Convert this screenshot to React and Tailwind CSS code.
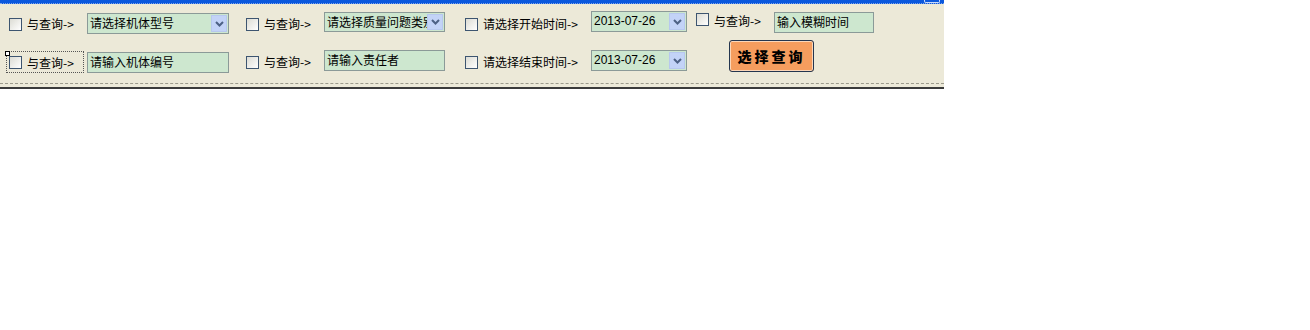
import React from "react";

const cn = '"Noto Sans CJK SC", "Noto Sans", sans-serif';

function Chevron() {
  return (
    <svg width="9" height="6" viewBox="0 0 9 6">
      <path d="M1 1 L4.5 4.5 L8 1" fill="none" stroke="#4d6185" strokeWidth="2" />
    </svg>
  );
}

function Check({ className = "" }) {
  return (
    <div
      className={`w-[13px] h-[13px] shrink-0 border border-[#3d5570] bg-gradient-to-br from-[#dcdcd4] to-white ${className}`}
    />
  );
}

function Label({ children, w, className = "" }) {
  return (
    <div
      className={`ml-[5px] shrink-0 text-[12px] leading-[14px] text-black whitespace-nowrap ${w} ${className}`}
      style={{ fontFamily: cn }}
    >
      {children}
    </div>
  );
}

function Field({ children, w, h = "h-[21px]", className = "", drop = false, mono = false }) {
  return (
    <div
      className={`shrink-0 relative flex items-start border border-[#8b9a98] bg-[#cde7cf] overflow-hidden ${w} ${h} ${className}`}
    >
      <div
        className="pl-[2px] pt-[1px] whitespace-nowrap text-black text-[12px] leading-[16px]"
        style={{ fontFamily: mono ? '"Liberation Sans", Arial, sans-serif' : cn }}
      >
        {children}
      </div>
      {drop && (
        <div className="absolute right-[1px] top-[1px] bottom-[1px] w-[16px] bg-[#c3d3f7] border border-[#b7c8ee] flex items-center justify-center">
          <Chevron />
        </div>
      )}
    </div>
  );
}

export default function App() {
  return (
    <div className="w-[1310px] h-[330px] bg-white">
      <div className="w-[944px] bg-[#ece9d8] flex flex-col">
        <div className="h-[4px] bg-[#0b58dd] flex justify-end border-b border-dotted border-[#7ea4ec]">
          <div className="w-[16px] h-[3px] mr-[4px] border border-t-0 border-[#c9dafa] rounded-b-[2px]" />
        </div>
        {/* row 1 */}
        <div className="mt-[7px] h-[39px] flex items-start pl-[9px]">
          <Check className="mt-[7px]" />
          <Label w="w-[60px]" className="mt-[6px]">与查询-&gt;</Label>
          <Field w="w-[142px]" className="mt-[2px]" drop>请选择机体型号</Field>

          <Check className="mt-[7px] ml-[17px]" />
          <Label w="w-[60px]" className="mt-[6px]">与查询-&gt;</Label>
          <Field w="w-[121px]" h="h-[20px]" className="mt-[1px]" drop>请选择质量问题类别</Field>

          <Check className="mt-[7px] ml-[20px]" />
          <Label w="w-[108px]" className="mt-[6px]">请选择开始时间-&gt;</Label>
          <Field w="w-[96px]" className="mt-0" drop mono>2013-07-26</Field>

          <Check className="mt-[2px] ml-[9px]" />
          <Label w="w-[60px]" className="mt-[3px]">与查询-&gt;</Label>
          <Field w="w-[100px]" className="mt-[1px]">输入模糊时间</Field>
        </div>
        {/* row 2 */}
        <div className="h-[33px] flex items-start pl-[9px]">
          <div className="relative -ml-[3px] mt-[1px] w-[78px] h-[22px] border border-dotted border-[#555] flex items-start shrink-0">
            <div className="absolute -left-[2px] -top-[1px] w-[5px] h-[5px] border border-black bg-white" />
            <Check className="ml-[2px] mt-[4px]" />
            <Label w="w-[56px]" className="mt-[4px]">与查询-&gt;</Label>
          </div>
          <Field w="w-[142px]" className="mt-[2px] ml-[3px]">请输入机体编号</Field>

          <Check className="mt-[6px] ml-[17px]" />
          <Label w="w-[60px]" className="mt-[5px]">与查询-&gt;</Label>
          <Field w="w-[121px]">请输入责任者</Field>

          <Check className="mt-[6px] ml-[20px]" />
          <Label w="w-[108px]" className="mt-[5px]">请选择结束时间-&gt;</Label>
          <Field w="w-[96px]" drop mono>2013-07-26</Field>

          <button
            className="-mt-[10px] ml-[42px] w-[85px] h-[32px] shrink-0 rounded-[3px] border border-[#24364f] bg-[#f59d5e] shadow-[inset_0_0_0_1px_#fbd6b8] text-black font-black text-[14px] tracking-[3px] flex items-center justify-center"
            style={{ fontFamily: cn }}
          >
            选择查询
          </button>
        </div>
        <div className="border-t border-dashed border-[#9c9a8c] h-[4px]" />
        <div className="h-[2px] bg-[#3a3a3a]" />
      </div>
    </div>
  );
}
